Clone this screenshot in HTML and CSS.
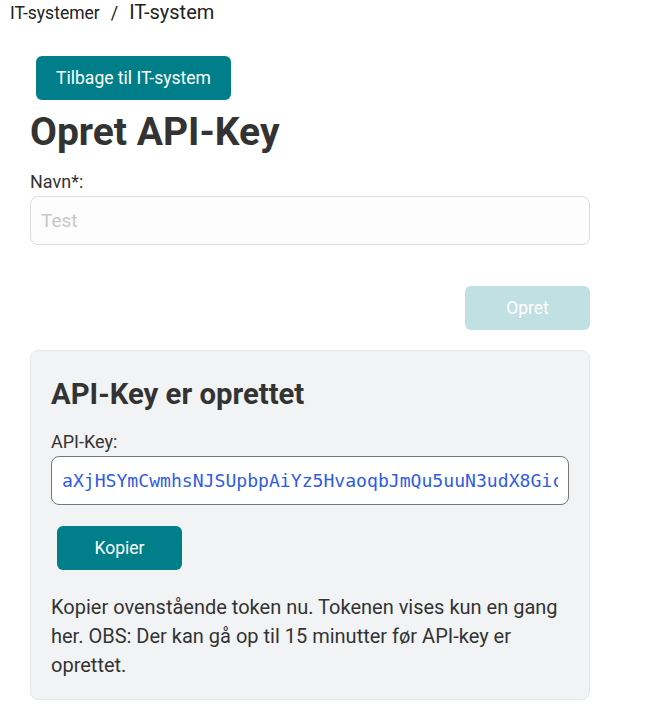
FILE: index.html
```html
<!DOCTYPE html>
<html lang="da">
<head>
<meta charset="utf-8">
<title>Opret API-Key</title>
<link rel="stylesheet" href="styles.css">
</head>
<body>
<nav class="breadcrumb">
  <span class="crumb">IT-systemer</span>
  <span class="sep">/</span>
  <span class="crumb current">IT-system</span>
</nav>
<main class="page">
  <button class="btn btn-back" type="button">Tilbage til IT-system</button>
  <h1 class="title">Opret API-Key</h1>
  <form class="form">
    <label class="label" for="navn">Navn*:</label>
    <input class="input" id="navn" type="text" placeholder="Test">
    <div class="actions">
      <button class="btn btn-disabled" type="button">Opret</button>
    </div>
  </form>
  <section class="card">
    <h2 class="card-title">API-Key er oprettet</h2>
    <label class="label" for="key">API-Key:</label>
    <input class="input key-input" id="key" type="text" readonly value="aXjHSYmCwmhsNJSUpbpAiYz5HvaoqbJmQu5uuN3udX8GicKp2LqRt7WzE">
    <button class="btn btn-copy" type="button">Kopier</button>
    <p class="note">Kopier ovenstående token nu. Tokenen vises kun en gang her. OBS: Der kan gå op til 15 minutter før API-key er oprettet.</p>
  </section>
</main>
</body>
</html>
```
FILE: styles.css
```css
* { box-sizing: border-box; }
body {
  margin: 0;
  font-family: Roboto, "Liberation Sans", sans-serif;
  color: #333;
  background: #fff;
}
.breadcrumb {
  display: flex;
  align-items: baseline;
  gap: 11px;
  padding: 0 10px;
  height: 24px;
  line-height: 24px;
  font-size: 17.5px;
  color: #222;
}
.breadcrumb .current { font-size: 20px; }
.breadcrumb .sep { font-size: 18px; }
.page {
  width: 560px;
  margin-left: 30px;
  padding-top: 32px;
}
.btn {
  display: block;
  border: 0;
  border-radius: 6px;
  font-family: Roboto, "Liberation Sans", sans-serif;
  font-size: 17.5px;
  color: #fff;
  background: #007f8a;
  height: 44px;
  cursor: pointer;
}
.btn-back {
  margin-left: 6px;
  padding: 0;
  width: 195px;
}
.title {
  margin: 8px 0 0;
  font-size: 39px;
  font-weight: 700;
  line-height: 48px;
  color: #333;
}
.form { margin-top: 15px; }
.label {
  display: block;
  font-size: 18px;
  line-height: 22px;
  color: #333;
  margin-bottom: 3px;
}
.input {
  display: block;
  width: 100%;
  height: 49px;
  border: 1px solid #dcdcdc;
  border-radius: 8px;
  background: #fdfdfd;
  padding: 0 10px;
  font-family: Roboto, "Liberation Sans", sans-serif;
  font-size: 19px;
  color: #333;
}
.input::placeholder { color: #c8c8c8; }
.actions {
  display: flex;
  justify-content: flex-end;
  margin-top: 41px;
}
.btn-disabled {
  width: 125px;
  background: #c1e0e3;
}
.card {
  margin-top: 20px;
  background: #f2f3f5;
  border: 1px solid #e6e7ea;
  border-radius: 8px;
  padding: 23px 20px 19px;
}
.card-title {
  margin: 0 0 17px;
  font-size: 29.3px;
  font-weight: 700;
  line-height: 40px;
}
.key-input {
  border-color: #767676;
  background: #fff;
  font-family: "DejaVu Sans Mono", "Liberation Mono", monospace;
  font-size: 18.1px;
  color: #2f5ce6;
}
.btn-copy {
  margin: 21px 0 0 6px;
  width: 125px;
}
.note {
  margin: 23px 0 0;
  font-size: 20px;
  line-height: 29px;
}
```
